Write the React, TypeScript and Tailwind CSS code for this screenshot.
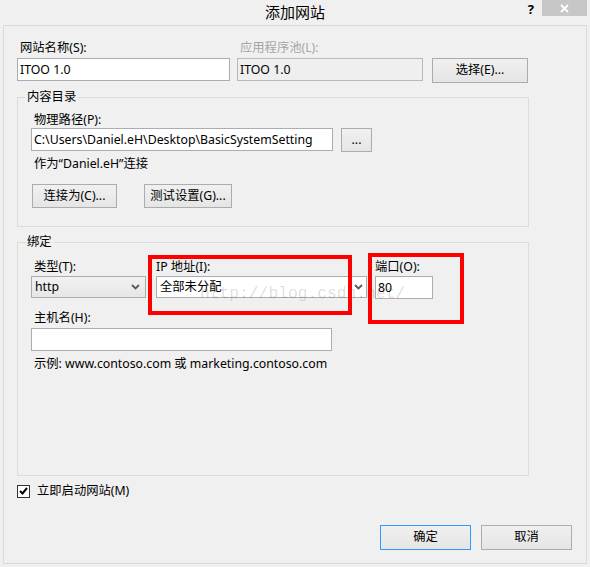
import React from "react";

const font = "font-['Noto_Sans','Noto_Sans_CJK_SC',sans-serif]";

function Chevron() {
  return (
    <svg width="9" height="6" viewBox="0 0 9 6" className="shrink-0">
      <polyline points="1,1 4.5,4.5 8,1" fill="none" stroke="#5a5a5a" strokeWidth="1.8" />
    </svg>
  );
}

function Btn({ children, className = "", primary = false }: any) {
  return (
    <button
      type="button"
      className={`flex items-center justify-center border bg-gradient-to-b from-[#f0f0f0] to-[#e5e5e5] text-[12.3px] leading-none text-black ${
        primary ? "border-[#3399ff]" : "border-[#acacac]"
      } ${className}`}
    >
      {children}
    </button>
  );
}

function Field({ value, className = "", disabled = false }: any) {
  return (
    <input
      readOnly
      defaultValue={value}
      className={`h-[23px] border px-[2px] text-[12.3px] text-black outline-none ${
        disabled ? "border-[#b9b9b9] bg-[#efefef]" : "border-[#abadb3] bg-white"
      } ${className}`}
    />
  );
}

export default function App() {
  return (
    <div className={`relative flex h-[567px] w-[590px] flex-col overflow-hidden bg-[#f0f0f0] text-[12.3px] text-black ${font}`}>
      {/* title bar */}
      <div className="grid h-[25px] shrink-0 grid-cols-[1fr_auto_1fr]">
        <div />
        <div className="pt-[3px] text-[15px] leading-[18px]">添加网站</div>
        <div className="flex items-start justify-end">
          <span className="mr-[8px] mt-[2px] text-[13px] font-bold leading-[14px]">?</span>
          <div className="mr-[3px] flex h-[16px] w-[45px] items-center justify-center bg-[#c7c7c7]">
            <svg width="9" height="9" viewBox="0 0 9 9">
              <path d="M1 1L8 8M8 1L1 8" stroke="#fff" strokeWidth="1.8" />
            </svg>
          </div>
        </div>
      </div>

      {/* client area */}
      <div className="mx-[3px] mb-[3px] flex flex-1 flex-col border border-[#dadada] pl-[13px] pr-[14px] pt-[14px] pb-[13px]">
        {/* name / app pool */}
        <div className="flex items-start">
          <div className="flex w-[213px] flex-col">
            <label className="mb-[2px] h-[16px] pl-[3px] leading-[16px]">网站名称(S):</label>
            <Field value="ITOO 1.0" />
          </div>
          <div className="ml-[7px] flex w-[186px] flex-col">
            <label className="mb-[2px] h-[16px] pl-[3px] leading-[16px] text-[#a6a6a6]">应用程序池(L):</label>
            <Field value="ITOO 1.0" disabled />
          </div>
          <Btn className="ml-[9px] mt-[18px] h-[25px] w-[96px]">选择(E)...</Btn>
        </div>

        {/* content directory */}
        <fieldset className="mt-[6px] h-[138px] w-[512px] border border-[#dcdcdc]">
          <legend className="ml-[7px] px-[2px] leading-[16px]">内容目录</legend>
          <div className="flex flex-col px-[13px] pt-[7px]">
            <label className="h-[16px] pl-[3px] leading-[16px]">物理路径(P):</label>
            <div className="flex items-start">
              <Field value="C:\Users\Daniel.eH\Desktop\BasicSystemSetting" className="w-[302px]" />
              <Btn className="ml-[8px] h-[24px] w-[31px]">...</Btn>
            </div>
            <div className="mt-[4px] h-[16px] pl-[3px] leading-[16px]">作为“Daniel.eH”连接</div>
            <div className="ml-[1px] mt-[12px] flex gap-[27px]">
              <Btn className="h-[24px] w-[85px]">连接为(C)...</Btn>
              <Btn className="h-[24px] w-[88px]">测试设置(G)...</Btn>
            </div>
          </div>
        </fieldset>

        {/* binding */}
        <fieldset className="mt-[7px] h-[242px] w-[512px] border border-[#dcdcdc]">
          <legend className="ml-[7px] px-[2px] leading-[16px]">绑定</legend>
          <div className="flex flex-col px-[13px] pt-[9px]">
            <div className="flex items-start">
              <div className="flex w-[115px] flex-col">
                <label className="mb-[1px] h-[16px] pl-[3px] leading-[16px]">类型(T):</label>
                <div className="flex h-[22px] items-center justify-between border border-[#acacac] bg-gradient-to-b from-[#f2f2f2] to-[#e6e6e6] pl-[3px] pr-[5px]">
                  <span>http</span>
                  <Chevron />
                </div>
              </div>
              <div className="ml-[10px] flex w-[211px] flex-col">
                <label className="mb-[1px] h-[16px] leading-[16px]">IP 地址(I):</label>
                <div className="flex h-[22px] items-center justify-between border border-[#abadb3] bg-white pl-[3px] pr-[3px]">
                  <span>全部未分配</span>
                  <Chevron />
                </div>
              </div>
              <div className="ml-[8px] flex w-[58px] flex-col">
                <label className="mb-[1px] h-[16px] leading-[16px]">端口(O):</label>
                <Field value="80" className="h-[22px]" />
              </div>
            </div>
            <label className="mt-[11px] mb-[2px] h-[16px] pl-[3px] leading-[16px]">主机名(H):</label>
            <Field value="" className="w-[301px]" />
            <div className="mt-[5px] h-[16px] pl-[3px] leading-[16px]">示例: www.contoso.com 或 marketing.contoso.com</div>
          </div>
        </fieldset>

        <div className="mt-[7px] flex items-center gap-[7px]">
          <div className="flex h-[13px] w-[13px] items-center justify-center border border-[#333] bg-white">
            <svg width="9" height="8" viewBox="0 0 9 8">
              <path d="M1 4L3.5 6.5L8 1" fill="none" stroke="#000" strokeWidth="2" />
            </svg>
          </div>
          <span className="leading-[16px]">立即启动网站(M)</span>
        </div>

        <div className="mt-auto flex justify-end gap-[10px]">
          <Btn primary className="h-[25px] w-[91px]">确定</Btn>
          <Btn className="h-[25px] w-[91px]">取消</Btn>
        </div>
      </div>

      {/* annotations over the screenshot */}
      <div className="pointer-events-none absolute left-[200px] top-[286px] font-['Liberation_Mono',monospace] text-[16.3px] leading-none text-black/[0.15]">
        http://blog.csdn.net/
      </div>
      <div className="pointer-events-none absolute left-[148px] top-[255px] h-[60px] w-[204px] border-[4px] border-[#ff0000]" />
      <div className="pointer-events-none absolute left-[368px] top-[253px] h-[71px] w-[96px] border-[4px] border-[#ff0000]" />
    </div>
  );
}
